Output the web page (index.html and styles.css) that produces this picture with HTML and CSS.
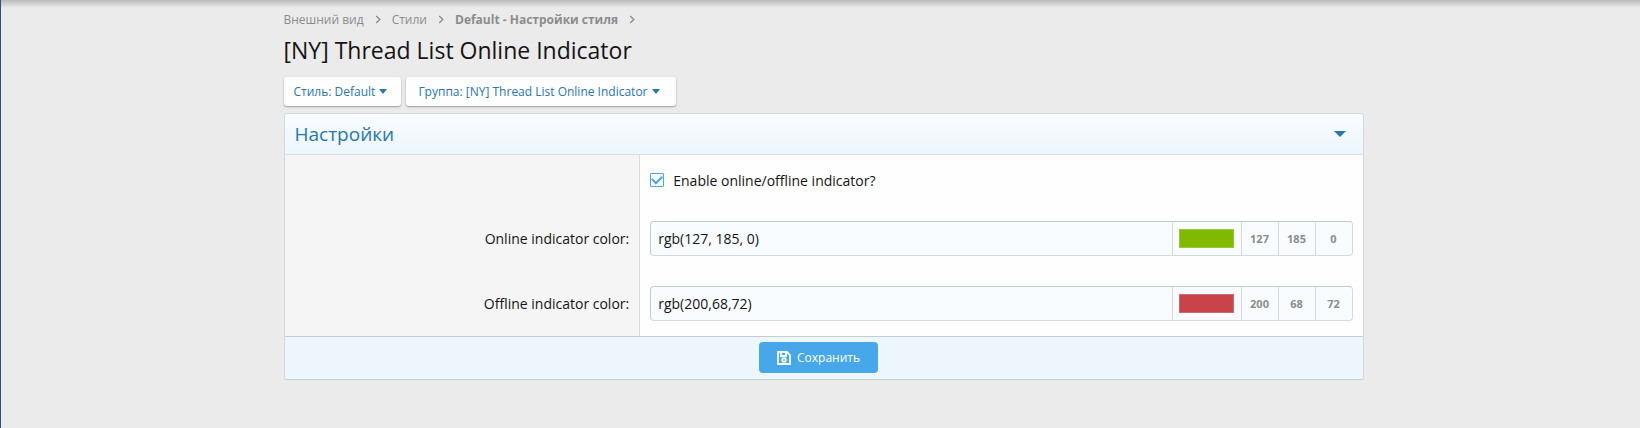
FILE: index.html
```
<!DOCTYPE html>
<html lang="ru">
<head>
<meta charset="utf-8">
<title>[NY] Thread List Online Indicator</title>
<link rel="stylesheet" href="styles.css">
</head>
<body>
<main class="content">
  <nav class="crumbs">
    <a href="#">Внешний вид</a>
    <svg class="chevron" viewBox="0 0 6 10"><path d="M1 1l4 4-4 4"/></svg>
    <a href="#">Стили</a>
    <svg class="chevron" viewBox="0 0 6 10"><path d="M1 1l4 4-4 4"/></svg>
    <a href="#" class="current">Default - Настройки стиля</a>
    <svg class="chevron" viewBox="0 0 6 10"><path d="M1 1l4 4-4 4"/></svg>
  </nav>
  <h1 class="title">[NY] Thread List Online Indicator</h1>
  <div class="menus">
    <button type="button" class="menu">Стиль: Default<svg class="caret" viewBox="0 0 8 5"><path d="M0 0h8L4 5z"/></svg></button>
    <button type="button" class="menu menu-wide">Группа: [NY] Thread List Online Indicator<svg class="caret" viewBox="0 0 8 5"><path d="M0 0h8L4 5z"/></svg></button>
  </div>
  <form class="block">
    <h2 class="block-header"><span>Настройки</span><svg class="toggle" viewBox="0 0 12 6"><path d="M0 0h12L6 6z"/></svg></h2>
    <div class="row">
      <div class="label"></div>
      <div class="field">
        <label class="check"><input type="checkbox" checked><span>Enable online/offline indicator?</span></label>
      </div>
    </div>
    <div class="row">
      <div class="label"><label for="online">Online indicator color:</label></div>
      <div class="field">
        <div class="group">
          <input class="text" id="online" type="text" value="rgb(127, 185, 0)">
          <span class="swatch-cell"><span class="swatch green"></span></span>
          <span class="number">127</span><span class="number">185</span><span class="number">0</span>
        </div>
      </div>
    </div>
    <div class="row">
      <div class="label"><label for="offline">Offline indicator color:</label></div>
      <div class="field">
        <div class="group">
          <input class="text" id="offline" type="text" value="rgb(200,68,72)">
          <span class="swatch-cell"><span class="swatch red"></span></span>
          <span class="number">200</span><span class="number">68</span><span class="number">72</span>
        </div>
      </div>
    </div>
    <div class="footer">
      <button type="submit" class="save"><svg class="disk" viewBox="0 0 14 14"><path d="M1 1h9l3 3v9H1z"/><path d="M4 1v4h5V1"/><circle cx="7" cy="9" r="1.8"/></svg>Сохранить</button>
    </div>
  </form>
</main>
</body>
</html>
```
FILE: styles.css
```
* { box-sizing: border-box; }
body {
  margin: 0;
  min-height: 100vh;
  padding-left: 6px;
  border-left: 1px solid #2b5377;
  background: linear-gradient(#bababa, #ebebeb 8px);
  color: #141414;
  font-family: "Open Sans", "Noto Sans", sans-serif;
  font-size: 14px;
}
.content {
  max-width: 1080px;
  margin: 0 auto;
  padding-top: 9px;
}
.crumbs {
  display: flex;
  align-items: center;
  gap: 11px;
  height: 20px;
  font-size: 12px;
}
.crumbs a { color: #8c8c8c; text-decoration: none; }
.crumbs .current { font-weight: 700; }
.chevron { width: 6px; height: 9px; fill: none; stroke: #8c8c8c; stroke-width: 1.5; }
.title { margin: 4px 0 10px; font-size: 23px; line-height: 34px; font-weight: 400; }
.menus { display: flex; gap: 5px; margin-bottom: 7px; }
.menu {
  height: 29px;
  padding: 0 14px 0 10px;
  border: 0;
  border-radius: 3px;
  background: #fefefe;
  box-shadow: 0 1px 2px rgba(0, 0, 0, .35);
  color: #2577b1;
  font: 12px "Open Sans", "Noto Sans", sans-serif;
}
.menu-wide { padding: 0 16px 0 12px; }
.caret { width: 8px; height: 5px; margin-left: 4px; vertical-align: 2px; fill: #2577b1; }
.block { border: 1px solid #d3d8da; border-bottom-color: #c3ced3; border-radius: 3px; background: #fefefe; }
.block-header {
  display: flex;
  align-items: center;
  justify-content: space-between;
  height: 41px;
  margin: 0;
  padding: 0 17px 0 10px;
  border-bottom: 1px solid #d8dee3;
  border-radius: 3px 3px 0 0;
  background: linear-gradient(#f8fcff, #edf6fd);
  color: #2577b1;
  font-size: 19px;
  font-weight: 400;
}
.toggle { width: 12px; height: 6px; fill: #2577b1; }
.row { display: grid; grid-template-columns: 33% 1fr; }
.label {
  padding: 0 10px;
  border-right: 1px solid #d8dcdf;
  background: #f5f5f5;
  line-height: 35px;
  text-align: right;
}
.field { padding: 0 10px 30px; }
.row:first-of-type .field { padding: 15px 10px 31px; }
.row:nth-of-type(3) .field { padding-bottom: 15px; }
.check { display: flex; align-items: center; gap: 9px; height: 20px; }
.check input {
  appearance: none;
  display: grid;
  place-items: center;
  width: 14px;
  height: 14px;
  margin: 0;
  border: 1px solid #47a7eb;
  border-radius: 1px;
  background: #fefefe;
}
.check input:checked::after {
  content: "";
  width: 8px;
  height: 5px;
  margin-bottom: 3px;
  border: solid #47a7eb;
  border-width: 0 0 2px 2px;
  transform: rotate(-45deg);
}
.group {
  display: flex;
  height: 35px;
  border: 1px solid #c3cbd0;
  border-right-color: #d3d9dd;
  border-bottom-color: #d3d9dd;
  border-radius: 4px;
  background: #f8fcff;
}
.text {
  flex: 1;
  min-width: 0;
  padding: 0 7px;
  border: 0;
  background: none;
  color: #141414;
  font: inherit;
}
.swatch-cell, .number { border-left: 1px solid #d3d9dd; display: flex; align-items: center; justify-content: center; }
.swatch-cell { width: 69px; }
.swatch { width: 55px; height: 19px; border: 1px solid rgba(255, 255, 255, .2); }
.green { background: #7fb900; }
.red { background: #c84448; }
.number { width: 37px; color: #8c8c8c; font-size: 11px; font-weight: 700; }
.footer {
  display: flex;
  justify-content: center;
  padding: 5px 10px 6px 0;
  border-top: 1px solid #c3ced3;
  border-radius: 0 0 3px 3px;
  background: #edf6fd;
}
.save {
  display: flex;
  align-items: center;
  justify-content: center;
  gap: 6px;
  height: 31px;
  padding: 0 18px;
  border: 0;
  border-radius: 4px;
  background: #47a7eb;
  color: #fefefe;
  font: 12px "Open Sans", "Noto Sans", sans-serif;
}
.disk { width: 14px; height: 14px; fill: none; stroke: #fefefe; stroke-width: 1.8; }
```
